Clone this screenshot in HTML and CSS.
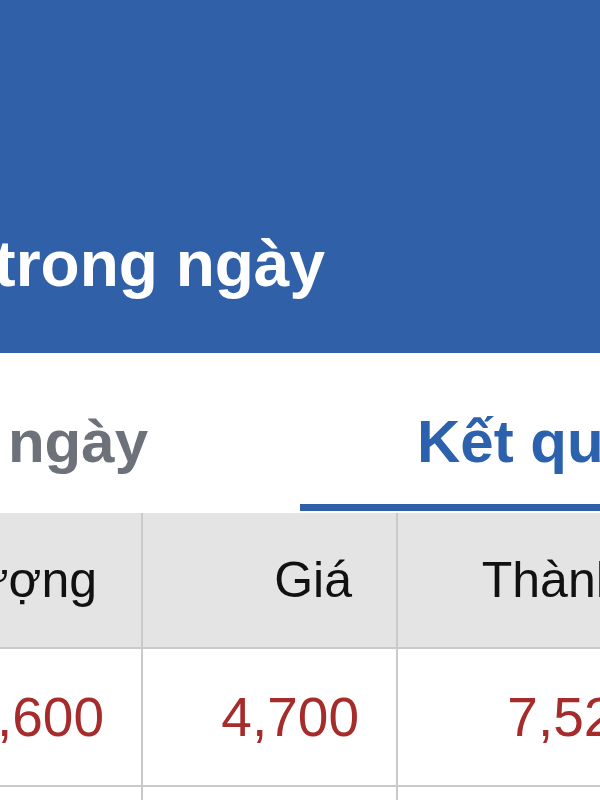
FILE: index.html
```html
<!DOCTYPE html>
<html lang="vi">
<head>
<meta charset="utf-8">
<title>Khớp lệnh trong ngày</title>
<link rel="stylesheet" href="styles.css">
</head>
<body>
<div class="page">
	<div class="topbar">
		<div class="topbar_title"><span>Khớp lệnh trong ngày</span></div>
	</div>

	<ul class="tabs">
		<li class="tab tab_left"><span>Lệnh trong ngày</span></li>
		<li class="tab tab_right active"><span>Kết quả khớp</span></li>
	</ul>

	<table class="grid">
		<colgroup>
			<col class="c_qty">
			<col class="c_price">
			<col class="c_total">
		</colgroup>
		<thead>
			<tr>
				<th class="qty">Khối lượng</th>
				<th class="price">Giá</th>
				<th class="total">Thành tiền</th>
			</tr>
		</thead>
		<tbody>
			<tr>
				<td>1,600</td>
				<td>4,700</td>
				<td class="total">7,520,000</td>
			</tr>
			<tr>
				<td>2,000</td>
				<td>4,700</td>
				<td class="total">9,400,000</td>
			</tr>
		</tbody>
	</table>
</div>
</body>
</html>
```

FILE: styles.css
```css
*{ padding:0; margin:0; box-sizing:border-box;}
ul{ list-style:none;}
html,body{ overflow:hidden; background:#fff;}
body{ font-family:"Liberation Sans", Arial, sans-serif; width:600px;}

.page{ width:600px; overflow:hidden;}

/* blue header */
.topbar{ background:#3060a8; height:353px; padding-top:232px;}
.topbar_title{ display:flex; justify-content:flex-end; width:325px; color:#fff; font-size:64px; font-weight:bold; line-height:64px; white-space:nowrap;}

/* tabs */
.tabs{ display:flex; height:158px;}
.tab{ flex:0 0 auto; padding-top:59px; font-size:60px; font-weight:bold; line-height:60px; color:#6d7179; white-space:nowrap; border-bottom:7px solid transparent;}
.tab_left{ width:300px; display:flex; justify-content:flex-end; padding-right:152px;}
.tab_right{ width:300px; padding-left:117px; overflow:hidden;}
.tab.active{ color:#2c62ad; border-bottom-color:#2f5fa7;}

/* result table */
.grid{ margin-top:2px; margin-left:-158px; border-collapse:collapse; table-layout:fixed; width:948px;}
.grid .c_qty{ width:300px;}
.grid .c_price{ width:255px;}
.grid .c_total{ width:393px;}
.grid th,.grid td{ border-right:2px solid #cacaca; border-bottom:2px solid #cacaca; text-align:right; vertical-align:middle; white-space:nowrap;}
.grid th{ background:#e4e4e4; height:135px; font-size:50px; font-weight:normal; color:#111; padding-right:44px;}
.grid th.total{ padding-right:71px;}
.grid td{ height:138px; font-size:55px; color:#a62b2b; padding-right:37px;}
```
